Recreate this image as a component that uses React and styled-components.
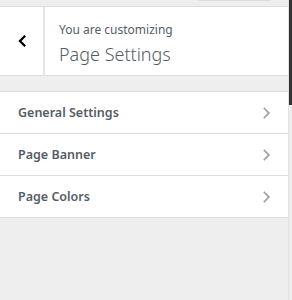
import React from "react";
import styled, { createGlobalStyle } from "styled-components";

const GlobalStyle = createGlobalStyle`
  html, body {
    margin: 0;
    padding: 0;
    background: #eee;
  }
  body {
    font-family: "Noto Sans", "Open Sans", sans-serif;
    color: #555d66;
  }
`;

const Frame = styled.div`
  display: flex;
  width: 292px;
  height: 300px;
  overflow: hidden;
`;

const Panel = styled.div`
  flex: 1;
  display: flex;
  flex-direction: column;
  background: #eee;
`;

const TopBar = styled.div`
  height: 6px;
  display: flex;
  justify-content: flex-end;
  padding-right: 17px;
  border-bottom: 1px solid #ddd;
`;

const TopButtonEdge = styled.div`
  width: 72px;
  height: 1px;
  background: #ddd;
`;

const Header = styled.div`
  display: flex;
  height: 68px;
  background: #fff;
  border-bottom: 1px solid #ddd;
`;

const BackButton = styled.button`
  width: 45px;
  flex-shrink: 0;
  display: flex;
  align-items: center;
  justify-content: center;
  padding: 0 0 0 1px;
  background: #fff;
  border: none;
  border-right: 2px solid #e5e5e5;
  color: #23282d;
`;

const Title = styled.div`
  display: flex;
  flex-direction: column;
  padding: 14px 0 0 14px;
`;

const Kicker = styled.span`
  font-size: 12px;
  line-height: 17px;
  color: #555d66;
`;

const Heading = styled.span`
  font-size: 18px;
  font-weight: 300;
  line-height: 24px;
  margin-top: 4px;
  color: #555d66;
`;

const List = styled.div`
  margin-top: 15px;
  border-top: 1px solid #ddd;
`;

const Row = styled.div`
  height: 41px;
  display: flex;
  align-items: center;
  justify-content: space-between;
  padding: 0 17px 0 18px;
  background: #fff;
  border-bottom: 1px solid #ddd;
  font-size: 12.5px;
  font-weight: 600;
  color: #555d66;
`;

const Scrollbar = styled.div`
  width: 3px;
  display: flex;
  flex-direction: column;
  border-left: 1px solid #e2e2e2;
`;

const Thumb = styled.div`
  height: 105px;
  background: #333;
`;

const Chevron = ({ dir = "right", color, size = 12, weight = 1.8 }) => (
  <svg width={size * 0.66} height={size} viewBox="0 0 8 12" fill="none">
    <path
      d={dir === "right" ? "M1.5 1.5 L6 6 L1.5 10.5" : "M6.5 1.5 L2 6 L6.5 10.5"}
      stroke={color}
      strokeWidth={weight}
      strokeLinecap="square"
    />
  </svg>
);

const sections = ["General Settings", "Page Banner", "Page Colors"];

export default function App() {
  return (
    <>
      <GlobalStyle />
      <Frame>
        <Panel>
          <TopBar>
            <TopButtonEdge />
          </TopBar>
          <Header>
            <BackButton aria-label="Back">
              <Chevron dir="left" color="#000" size={12} weight={2.3} />
            </BackButton>
            <Title>
              <Kicker>You are customizing</Kicker>
              <Heading>Page Settings</Heading>
            </Title>
          </Header>
          <List>
            {sections.map((s) => (
              <Row key={s}>
                {s}
                <Chevron color="#a0a5aa" size={12} />
              </Row>
            ))}
          </List>
        </Panel>
        <Scrollbar>
          <Thumb />
        </Scrollbar>
      </Frame>
    </>
  );
}
